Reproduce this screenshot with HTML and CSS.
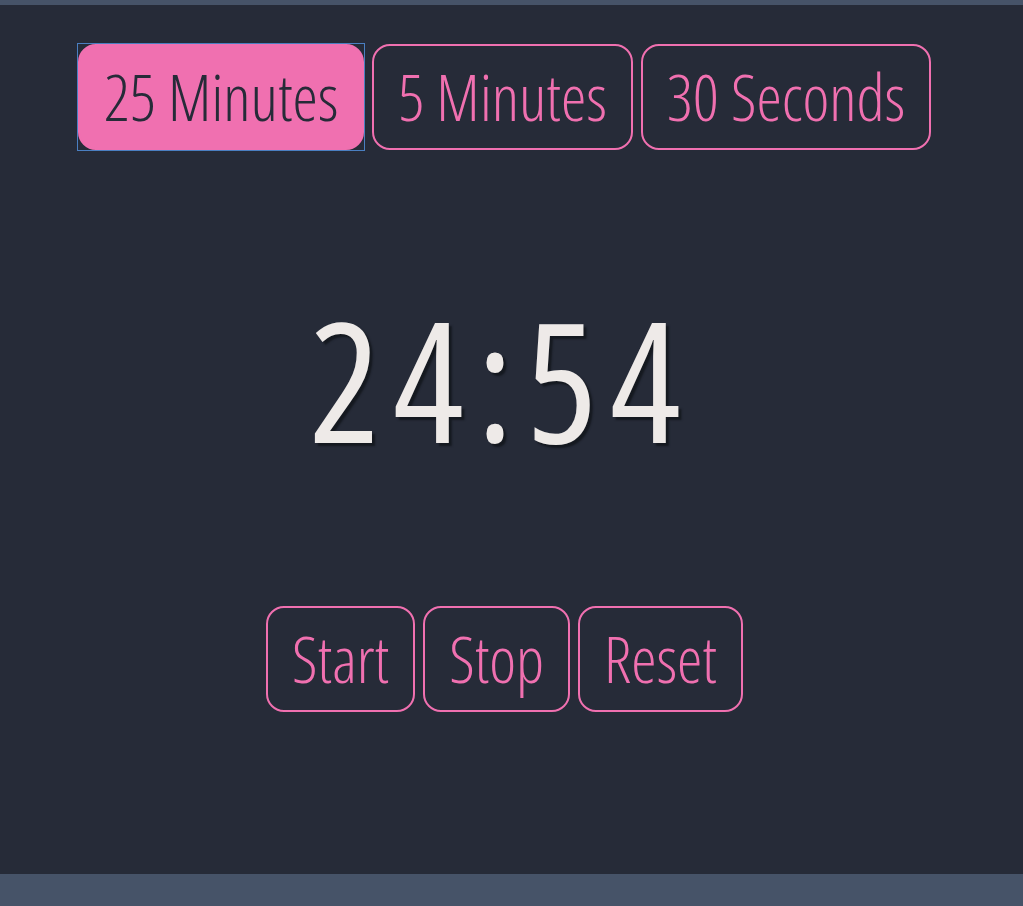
FILE: index.html
```html
<!DOCTYPE html>
<html lang="en">
<head>
<meta charset="utf-8">
<title>Pomodoro</title>
<link rel="stylesheet" href="styles.css">
</head>
<body>
<main class="app">
  <div class="modes">
    <button class="btn active">25 Minutes</button>
    <button class="btn">5 Minutes</button>
    <button class="btn">30 Seconds</button>
  </div>
  <div class="timer">24:54</div>
  <div class="controls">
    <button class="btn">Start</button>
    <button class="btn">Stop</button>
    <button class="btn">Reset</button>
  </div>
</main>
</body>
</html>
```

FILE: styles.css
```css
html, body {
  margin: 0;
  padding: 0;
}
body {
  background: #465368;
  font-family: "Open Sans", "Liberation Sans", sans-serif;
  font-weight: 300;
  font-stretch: 75%;
}
.app {
  margin-top: 5px;
  height: 869px;
  background: #262b38;
  display: flex;
  flex-direction: column;
  align-items: center;
  padding-right: 14px;
  box-sizing: border-box;
}
.modes, .controls {
  display: flex;
  gap: 8px;
}
.modes {
  margin-top: 39px;
}
.btn {
  position: relative;
  font-family: inherit;
  font-weight: 300;
  font-stretch: 75%;
  font-size: 64px;
  line-height: 82px;
  color: #f070b0;
  background: transparent;
  border: 2px solid #f070b0;
  border-radius: 18px;
  padding: 10px 24px;
  cursor: pointer;
}
.btn.active {
  background: #f070b0;
  color: #262b38;
}
.btn.active::after {
  content: "";
  position: absolute;
  top: -3px;
  left: -3px;
  right: -3px;
  bottom: -3px;
  border: 1px solid #4a7fc1;
  pointer-events: none;
}
.timer {
  margin-top: 130px;
  font-size: 166px;
  font-weight: 500;
  line-height: 1.2;
  letter-spacing: 13px;
  padding-right: 6px;
  color: #eeeae8;
  text-shadow: 3px 3px 2px #151920;
}
.controls {
  margin-top: 127px;
}
```
